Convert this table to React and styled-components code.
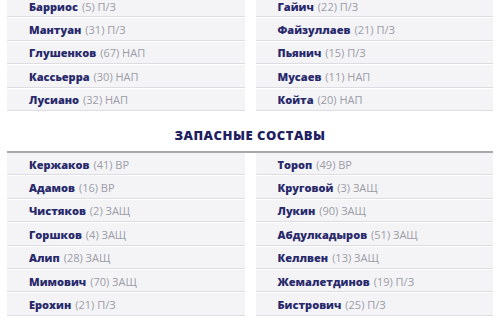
import React from "react";
import styled, { createGlobalStyle } from "styled-components";

const GlobalStyle = createGlobalStyle`
  html, body {
    margin: 0;
    padding: 0;
    background: #ffffff;
    overflow: hidden;
  }
  body {
    font-family: "Open Sans", "Liberation Sans", sans-serif;
  }
`;

const Page = styled.div`
  width: 500px;
  height: 320px;
  overflow: hidden;
  background: #ffffff;
`;

// the screenshot is scrolled a little, so the first row is cut off at the top
const Scroller = styled.div`
  margin-top: -5px;
  padding: 0 7px;
`;

const Columns = styled.div`
  display: grid;
  grid-template-columns: 1fr 1fr;
  column-gap: 11px;
  border-top: ${({ $divider }) => ($divider ? "2px solid #a9a9ad" : "none")};
`;

const Column = styled.ul`
  list-style: none;
  margin: 0;
  padding: 0;
  display: flex;
  flex-direction: column;
  gap: 1px;
`;

const Row = styled.li`
  box-sizing: border-box;
  height: 22.4px;
  display: flex;
  align-items: center;
  padding: 2px 0 0 22px;
  background: #f4f4f7;
  border-bottom: 1px solid #dcdce2;
  font-size: 11px;
  line-height: 14px;
  white-space: nowrap;
`;

const Name = styled.span`
  font-weight: 800;
  color: #28296b;
  margin-right: 4px;
`;

const Info = styled.span`
  font-weight: 400;
  color: #9c9ca6;
`;

const Title = styled.h2`
  margin: 0;
  height: 40px;
  box-sizing: border-box;
  padding: 17px 0 0;
  text-align: center;
  font-family: "Open Sans", "Liberation Sans", sans-serif;
  font-weight: 800;
  font-size: 13px;
  line-height: 14px;
  letter-spacing: 0.5px;
  color: #202060;
`;

const starters = [
  [
    ["Барриос", "(5) П/З"],
    ["Мантуан", "(31) П/З"],
    ["Глушенков", "(67) НАП"],
    ["Кассьерра", "(30) НАП"],
    ["Лусиано", "(32) НАП"],
  ],
  [
    ["Гайич", "(22) П/З"],
    ["Файзуллаев", "(21) П/З"],
    ["Пьянич", "(15) П/З"],
    ["Мусаев", "(11) НАП"],
    ["Койта", "(20) НАП"],
  ],
];

const bench = [
  [
    ["Кержаков", "(41) ВР"],
    ["Адамов", "(16) ВР"],
    ["Чистяков", "(2) ЗАЩ"],
    ["Горшков", "(4) ЗАЩ"],
    ["Алип", "(28) ЗАЩ"],
    ["Мимович", "(70) ЗАЩ"],
    ["Ерохин", "(21) П/З"],
  ],
  [
    ["Тороп", "(49) ВР"],
    ["Круговой", "(3) ЗАЩ"],
    ["Лукин", "(90) ЗАЩ"],
    ["Абдулкадыров", "(51) ЗАЩ"],
    ["Келлвен", "(13) ЗАЩ"],
    ["Жемалетдинов", "(19) П/З"],
    ["Бистрович", "(25) П/З"],
  ],
];

function Lineup({ teams, divider }) {
  return (
    <Columns $divider={divider}>
      {teams.map((players, i) => (
        <Column key={i}>
          {players.map(([name, info]) => (
            <Row key={name}>
              <Name>{name}</Name>
              <Info>{info}</Info>
            </Row>
          ))}
        </Column>
      ))}
    </Columns>
  );
}

export default function App() {
  return (
    <Page>
      <GlobalStyle />
      <Scroller>
        <Lineup teams={starters} />
        <Title>ЗАПАСНЫЕ СОСТАВЫ</Title>
        <Lineup teams={bench} divider />
      </Scroller>
    </Page>
  );
}
